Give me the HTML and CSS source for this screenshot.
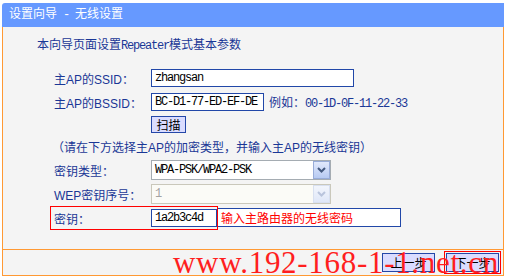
FILE: index.html
```html
<!doctype html>
<html lang="zh-CN">
  <head>
    <meta charset="UTF-8" />
    <meta name="viewport" content="width=device-width, initial-scale=1.0" />
    <title>设置向导 - 无线设置</title>
    <link rel="stylesheet" href="styles.css">
  </head>
  <body>
    <div class="wizard">
      <div class="wizard-title">设置向导<span class="mono"> - </span>无线设置</div>
      <div class="wizard-body">
        <p class="intro">本向导页面设置<span class="mono">Repeater</span>模式基本参数</p>

        <div class="row row-ssid">
          <span class="label">主AP的SSID：</span>
          <input class="field field-ssid" type="text" value="zhangsan" />
        </div>
        <div class="row row-bssid">
          <span class="label">主AP的BSSID：</span>
          <input class="field field-bssid" type="text" value="BC-D1-77-ED-EF-DE" />
          <span class="example">例如：<span class="mono">00-1D-0F-11-22-33</span></span>
        </div>
        <div class="row row-scan">
          <span class="label"></span>
          <button class="scan-button">扫描</button>
        </div>

        <p class="note">（请在下方选择主AP的加密类型，并输入主AP的无线密钥）</p>

        <div class="row row-select">
          <span class="label">密钥类型：</span>
          <div class="select">
            <span class="select-value">WPA-PSK/WPA2-PSK</span>
            <span class="select-arrow">
              <svg width="9" height="6" viewBox="0 0 9 6"><polyline points="1,1 4.5,4.5 8,1" fill="none" stroke="#44597f" stroke-width="2" /></svg>
            </span>
          </div>
        </div>
        <div class="row row-select-off">
          <span class="label">WEP密钥序号：</span>
          <div class="select select-disabled">
            <span class="select-value">1</span>
            <span class="select-arrow">
              <svg width="9" height="6" viewBox="0 0 9 6"><polyline points="1,1 4.5,4.5 8,1" fill="none" stroke="#b9c4dc" stroke-width="2" /></svg>
            </span>
          </div>
        </div>

        <div class="row row-key">
          <div class="mark">
            <span class="label">密钥：</span>
            <input class="field field-key" type="text" value="1a2b3c4d" />
          </div>
          <div class="hint">输入主路由器的无线密码</div>
        </div>
      </div>
      <div class="wizard-foot">
        <button class="nav-button nav-prev">上一步</button>
        <span class="mark-button"><button class="nav-button">下一步</button></span>
      </div>
      <div class="watermark">www.192-168-1-1.net.cn</div>
    </div>
  </body>
</html>
```

FILE: styles.css
```css
body {
  margin: 0;
  background-color: #fff;
  font-family: "Liberation Sans", "Noto Sans CJK SC", sans-serif;
  font-size: 12px;
  color: #1a3796;
}

.wizard {
  position: relative;
  width: 502px;
  margin: 3px 0 0 2px;
}

.wizard-title {
  height: 24px;
  padding-left: 7px;
  line-height: 22px;
  color: #fff;
  background-color: #6699ff;
  border-top-left-radius: 3px;
  white-space: pre;
}

.wizard-body {
  height: 222px;
  box-sizing: border-box;
  padding-top: 10px;
  border-left: 1px solid #ff9933;
  border-right: 1px solid #ff9933;
  background-color: #f4f4f4;
}

.mono {
  font-family: "Liberation Mono", monospace;
  letter-spacing: -1.2px;
}

.intro {
  margin: 0 0 15px 34px;
  line-height: 16px;
}

.row {
  display: flex;
  align-items: center;
  padding-left: 51px;
}

.label {
  width: 97px;
  flex-shrink: 0;
}

.row-ssid,
.row-bssid {
  height: 18px;
}

.row-ssid {
  margin-bottom: 6px;
}

.row-bssid {
  margin-bottom: 5px;
}

.row-scan {
  height: 17px;
  margin-bottom: 7px;
}

.note {
  height: 16px;
  margin: 0 0 4px 49px;
  line-height: 16px;
}

.row-select,
.row-select-off {
  height: 20px;
  margin-bottom: 4px;
}

.row-select-off {
  margin-bottom: 2px;
}

.row-key {
  height: 24px;
  align-items: flex-start;
  padding-left: 47px;
}

.field {
  box-sizing: border-box;
  height: 18px;
  padding: 0 3px;
  border: 1px solid #2147a8;
  background-color: #fff;
  color: #000;
  font-family: "Liberation Mono", monospace;
  font-size: 12px;
  letter-spacing: -1.2px;
  outline: none;
}

.field-ssid {
  width: 203px;
}

.field-bssid {
  width: 113px;
}

.field-key {
  width: 66px;
}

.example {
  margin-left: 5px;
}

.scan-button,
.nav-button {
  box-sizing: border-box;
  padding: 0;
  border: 1px solid #2447a8;
  background-color: #dadcff;
  color: #000;
  font-family: "Noto Sans CJK SC", sans-serif;
  font-size: 12px;
}

.scan-button {
  width: 35px;
  height: 17px;
  line-height: 15px;
}

.select {
  display: flex;
  box-sizing: border-box;
  width: 180px;
  height: 20px;
  border: 1px solid #a5acb2;
  background-color: #fff;
}

.select-value {
  flex: 1;
  padding-left: 3px;
  line-height: 18px;
  color: #000;
  font-family: "Liberation Mono", monospace;
  letter-spacing: -1.2px;
}

.select-arrow {
  display: flex;
  align-items: center;
  justify-content: center;
  box-sizing: border-box;
  width: 17px;
  height: 18px;
  border: 1px solid #98acd8;
  background: linear-gradient(#e1e9fc, #b7caf2);
}

.select-disabled {
  border-color: #cac8bb;
  background-color: #fbfbf7;
}

.select-disabled .select-value {
  color: #a3a3a3;
}

.select-disabled .select-arrow {
  border-color: #d8e0f0;
  background: linear-gradient(#f2f5fc, #dfe7f8);
}

.mark {
  display: flex;
  align-items: center;
  padding: 2px 0 2px 3px;
  border: 1px solid #ff0000;
}

.hint {
  box-sizing: border-box;
  width: 183px;
  height: 19px;
  margin-top: 2px;
  padding-left: 3px;
  border: 1px solid #2147a8;
  border-left: none;
  background-color: #fff;
  line-height: 17px;
  color: #ff0000;
  font-family: "Noto Sans CJK SC", sans-serif;
}

.wizard-foot {
  display: flex;
  justify-content: flex-end;
  align-items: center;
  height: 25px;
  padding-right: 2px;
  border: 1px solid #ff9933;
  background-color: #f4f4f4;
}

.nav-button {
  width: 53px;
  height: 19px;
}

.nav-prev {
  margin-right: 9px;
}

.mark-button {
  display: flex;
  padding: 1px;
  border: 1px solid #ff0000;
}

.watermark {
  position: absolute;
  left: 171px;
  top: 244px;
  color: #ff1e1e;
  font-family: "Liberation Serif", serif;
  font-size: 31px;
  line-height: 31px;
  letter-spacing: 0.7px;
  white-space: nowrap;
  pointer-events: none;
}
```
